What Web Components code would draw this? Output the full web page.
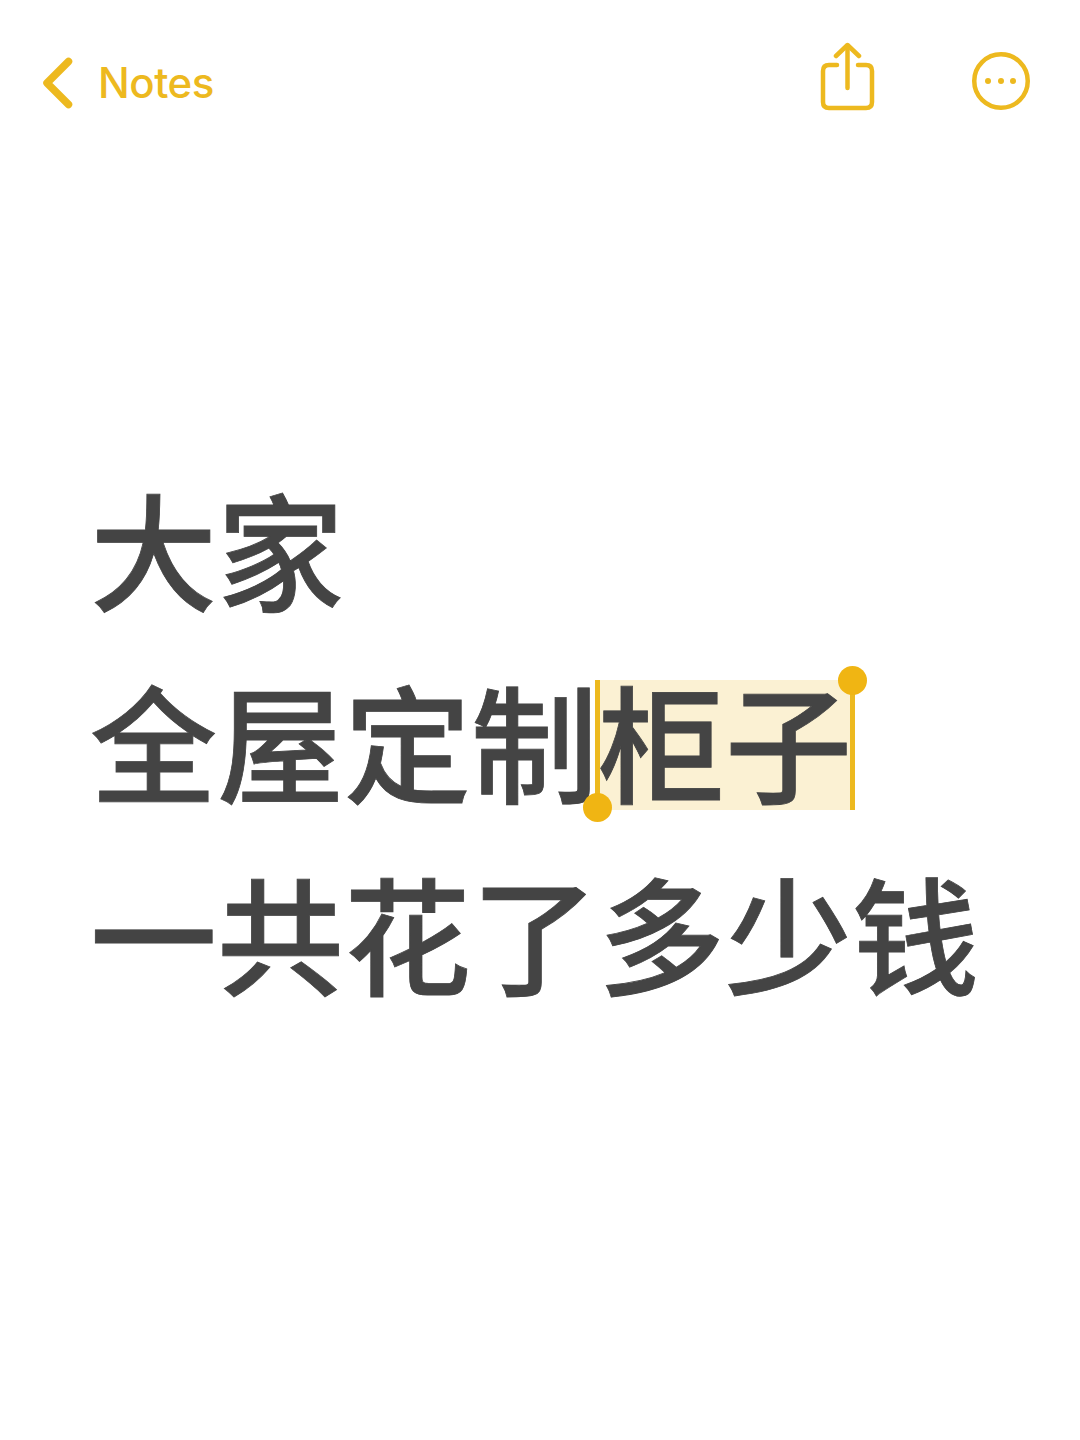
<!DOCTYPE html>
<html lang="zh-CN">
<head>
<meta charset="utf-8">
<title>Notes</title>
<style>
  html, body { margin: 0; padding: 0; background: #fff; }
</style>
</head>
<body>
<notes-page>
  <notes-toolbar slot="toolbar"></notes-toolbar>
  <note-line>大家</note-line>
  <note-line>全屋定制<text-selection>柜子</text-selection></note-line>
  <note-line>一共花了多少钱</note-line>
</notes-page>

<script>
class NotesPage extends HTMLElement {
    constructor() {
        super();
        this.shadowDOM = this.attachShadow({mode: "open"});
        this.shadowDOM.innerHTML = `
            <style>
            :host {
                display: block;
                width: 1080px;
                height: 1440px;
                background: #fff;
                overflow: hidden;
            }
            .note {
                padding: 322px 0 0 90px;
            }
            </style>
            <slot name="toolbar"></slot>
            <div class="note"><slot></slot></div>`;
    }
}

class NotesToolbar extends HTMLElement {
    constructor() {
        super();
        this.shadowDOM = this.attachShadow({mode: "open"});
        this.shadowDOM.innerHTML = `
            <style>
            :host {
                display: flex;
                align-items: center;
                justify-content: space-between;
                height: 96px;
                padding: 33px 49px 0 41px;
                color: #edb91f;
            }
            .back {
                display: flex;
                align-items: center;
                gap: 23px;
            }
            .back span {
                margin-top: 4px;
                font: 500 42px/48px "Inter", "Liberation Sans", sans-serif;
                letter-spacing: -0.5px;
            }
            .actions {
                display: flex;
                align-items: center;
                gap: 94px;
            }
            .share {
                margin-bottom: 8px;
            }
            svg {
                display: block;
                fill: none;
                stroke: currentColor;
                stroke-linecap: round;
                stroke-linejoin: round;
            }
            </style>
            <div class="back">
                <svg width="34" height="56" viewBox="0 0 34 56" stroke-width="7.500">
                    <path d="M27.500 8.500 L6 30 L27.500 51.500"/>
                </svg>
                <span>Notes</span>
            </div>
            <div class="actions">
                <svg class="share" width="58" height="70" viewBox="0 0 58 70" stroke-width="4.500">
                    <path d="M18 23 H10 Q4 23 4 29 V60 Q4 66 10 66 H47 Q53 66 53 60 V29 Q53 23 47 23 H39"/>
                    <path d="M28.500 46 V4"/>
                    <path d="M17 14 L28.500 3 L40 14"/>
                </svg>
                <svg width="60" height="60" viewBox="0 0 60 60" stroke-width="4.500">
                    <circle cx="30" cy="30" r="26.750"/>
                    <g fill="currentColor" stroke="none">
                        <circle cx="17" cy="30" r="3"/>
                        <circle cx="30" cy="30" r="3"/>
                        <circle cx="42" cy="30" r="3"/>
                    </g>
                </svg>
            </div>`;
    }
}

class NoteLine extends HTMLElement {
    constructor() {
        super();
        this.shadowDOM = this.attachShadow({mode: "open"});
        this.shadowDOM.innerHTML = `
            <style>
            :host {
                display: block;
                height: 192px;
                font: 500 127px/192px "Noto Sans CJK SC", "Noto Sans", sans-serif;
                -webkit-text-stroke: 0.8px #444444;
                color: #444444;
                white-space: nowrap;
            }
            </style>
            <slot></slot>`;
    }
}

class TextSelection extends HTMLElement {
    constructor() {
        super();
        this.shadowDOM = this.attachShadow({mode: "open"});
        this.shadowDOM.innerHTML = `
            <style>
            :host {
                display: inline-block;
                position: relative;
                height: 130px;
                line-height: 118px;
                padding-right: 3px;
                vertical-align: baseline;
                background: #fbf1d3;
            }
            .caret {
                position: absolute;
                width: 5px;
                background: #edb91f;
            }
            .start { left: -3px; top: 0; bottom: 2px; }
            .end { right: 0; top: 0; bottom: 0; }
            .dot {
                position: absolute;
                width: 29px;
                height: 29px;
                border-radius: 50%;
                background: #f0b513;
            }
            .start .dot { left: -12px; bottom: -14px; }
            .end .dot { left: -12px; top: -14px; }
            </style>
            <slot></slot>
            <div class="caret start"><div class="dot"></div></div>
            <div class="caret end"><div class="dot"></div></div>`;
    }
}

customElements.define("notes-page", NotesPage);
customElements.define("notes-toolbar", NotesToolbar);
customElements.define("note-line", NoteLine);
customElements.define("text-selection", TextSelection);
</script>
</body>
</html>
